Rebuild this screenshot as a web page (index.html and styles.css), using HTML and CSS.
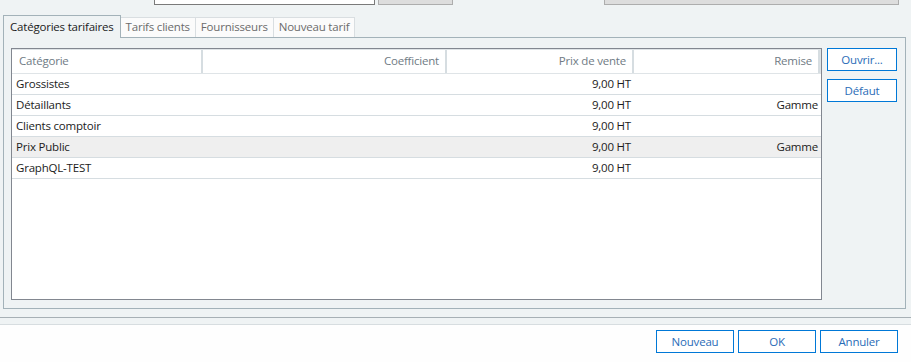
FILE: index.html
```html
<!DOCTYPE html>
<html lang="fr">
<head>
<meta charset="UTF-8">
<title>Catégories tarifaires</title>
<link rel="stylesheet" href="styles.css">
</head>
<body>

<div class="topbar">
  <div class="top-input"></div>
  <div class="top-button"></div>
  <div class="top-field"></div>
</div>

<div class="tabs">
  <div class="tab active">Catégories tarifaires</div>
  <div class="tab">Tarifs clients</div>
  <div class="tab">Fournisseurs</div>
  <div class="tab">Nouveau tarif</div>
</div>

<div class="panel">
  <div class="list">
    <div class="list-head">
      <div class="hcell left">Catégorie</div>
      <div class="hcell">Coefficient</div>
      <div class="hcell">Prix de vente</div>
      <div class="hcell">Remise</div>
    </div>
    <div class="row">
      <div class="cell left">Grossistes</div><div class="cell"></div><div class="cell">9,00 HT</div><div class="cell"></div>
    </div>
    <div class="row">
      <div class="cell left">Détaillants</div><div class="cell"></div><div class="cell">9,00 HT</div><div class="cell">Gamme</div>
    </div>
    <div class="row">
      <div class="cell left">Clients comptoir</div><div class="cell"></div><div class="cell">9,00 HT</div><div class="cell"></div>
    </div>
    <div class="row selected">
      <div class="cell left">Prix Public</div><div class="cell"></div><div class="cell">9,00 HT</div><div class="cell">Gamme</div>
    </div>
    <div class="row">
      <div class="cell left">GraphQL-TEST</div><div class="cell"></div><div class="cell">9,00 HT</div><div class="cell"></div>
    </div>
  </div>
  <div class="side">
    <button class="btn">Ouvrir...</button>
    <button class="btn">Défaut</button>
  </div>
</div>

<div class="footer">
  <div class="footer-inner">
    <button class="btn wide">Nouveau</button>
    <button class="btn wide">OK</button>
    <button class="btn wide">Annuler</button>
  </div>
</div>
<div class="statusbar"></div>

</body>
</html>
```

FILE: styles.css
```css
body {
  margin: 0;
  background-color: #eff3f4;
  font-family: "Segoe UI", "Open Sans", sans-serif;
  font-size: 11.5px;
  letter-spacing: -0.2px;
  color: #1b1b1b;
  width: 911px;
  height: 362px;
  overflow: hidden;
}

/* top strip, only the bottom of the fields shows */
.topbar {
  display: flex;
  height: 5px;
}
.top-input {
  margin-left: 154px;
  width: 219px;
  height: 4px;
  background: #fff;
  border: 1px solid #7a7a7a;
  border-top: none;
}
.top-button {
  margin-left: 3px;
  width: 73px;
  height: 4px;
  background: #dddddd;
  border: 1px solid #adadad;
  border-top: none;
}
.top-field {
  margin-left: 151px;
  width: 293px;
  height: 4px;
  background: #dddddd;
  border: 1px solid #adadad;
  border-top: none;
}

/* tabs */
.tabs {
  display: flex;
  align-items: flex-end;
  margin-top: 10px;
  padding-left: 3px;
  position: relative;
  z-index: 1;
}
.tab {
  height: 19px;
  line-height: 18px;
  padding: 0 5px;
  background: #fbfbfb;
  border: 1px solid #d9dee1;
  border-bottom: none;
  border-left: none;
  color: #6b6b6b;
}
.tab.active {
  height: 22px;
  line-height: 21px;
  padding: 0 6px;
  background: #eff3f4;
  border: 1px solid #a3b2b9;
  border-bottom: none;
  color: #1b1b1b;
  margin-bottom: -1px;
}

.panel {
  display: flex;
  gap: 5px;
  margin: 0 5px 0 3px;
  padding: 10px 8px 8px 7px;
  border: 1px solid #a3b2b9;
}

/* list view */
.list {
  flex: 1;
  height: 250px;
  background: #fff;
  border: 1px solid #828790;
}
.list-head,
.row {
  display: grid;
  grid-template-columns: 191px 244px 187px 1fr;
}
.list-head {
  height: 23px;
  border: 1px solid #dfe4e7;
  border-left: none;
}
.hcell {
  line-height: 22px;
  padding: 0 6px;
  text-align: right;
  color: #6f7b84;
  border-right: 2px solid #d6dde1;
}
.hcell.left {
  text-align: left;
  padding-left: 7px;
}
.row {
  height: 20px;
  border-bottom: 1px solid #d6dde1;
}
.row.selected {
  background: #efefef;
}
.cell {
  line-height: 20px;
  padding: 0 3px;
  text-align: right;
  white-space: nowrap;
}
.cell.left {
  text-align: left;
  padding-left: 4px;
}

/* buttons */
.side {
  width: 70px;
  display: flex;
  flex-direction: column;
  gap: 8px;
}
.btn {
  height: 23px;
  padding: 0;
  background: #fff;
  border: 1px solid #0078d7;
  color: #2a6cb7;
  font-family: inherit;
  font-size: 11.5px;
  letter-spacing: -0.2px;
}
.btn.wide {
  width: 78px;
}

.footer {
  margin-top: 8px;
  border-top: 1px solid #a7b0b5;
  padding-top: 6px;
}
.footer-inner {
  display: flex;
  justify-content: flex-end;
  gap: 4px;
  height: 34px;
  padding: 5px 13px 0 0;
  background: #fefefe;
  border-top: 1px solid #d7dde0;
}
.statusbar {
  height: 4px;
  background: #dce1e4;
}
```
